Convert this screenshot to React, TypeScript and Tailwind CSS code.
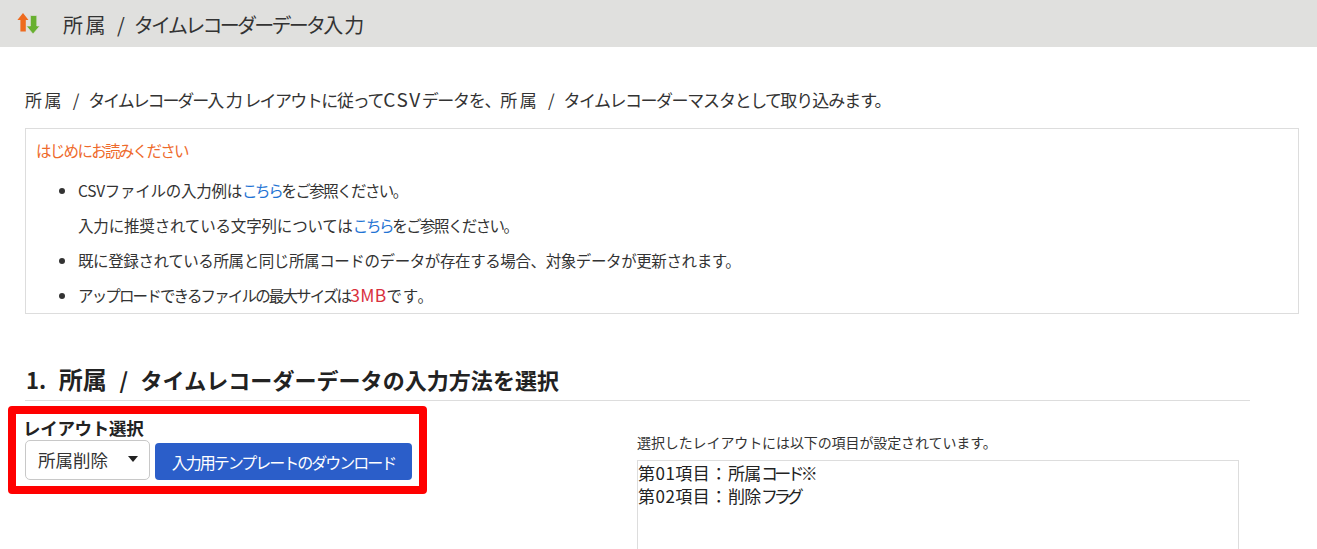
export default function App() {
  return (
    <div className="relative h-[549px] w-[1317px] overflow-hidden bg-white text-[#333333] font-['Noto_Sans_CJK_JP','Liberation_Sans',sans-serif]">
      <header className="flex h-[47px] items-center bg-[#e0e0de] pl-[16px]">
        <svg width="24" height="24" viewBox="0 0 24 24">
          <path d="M7 1 L12.5 8 H9.8 V19.5 H4.4 V8 H1.4 Z" fill="#ee6b1f" />
          <path d="M17 22 L23.8 14 H20.8 V3.5 H14.4 V14 H10.4 Z" fill="#68b030" stroke="#e0e0de" strokeWidth="0.7" />
        </svg>
        <h1 className="ml-[23px] mt-[3px] whitespace-nowrap text-[20px] font-normal leading-none [word-spacing:4.5px] text-[#333333]">
          <span className="tracking-[2.5px]">所属</span> / <span className="tracking-[-2.75px]">タイムレコーダーデータ</span>
          <span className="tracking-[1px]">入力</span>
        </h1>
      </header>

      <div className="pl-[25px] pr-[18px]">
        <p className="mt-[41px] h-[24px] text-[17px] leading-[24px] [word-spacing:5px] whitespace-nowrap">
          <span className="tracking-[2.5px]">所属</span> / <span className="tracking-[-2.1px]">タイムレコーダー</span>
          <span className="tracking-[1.5px]">入力</span>
          <span className="tracking-[-1.6px]">レイアウト</span>
          <span className="tracking-[-1.25px]">に従って</span>
          <span className="text-[19px] leading-none tracking-[1.5px]">CSV</span>
          <span className="tracking-[-1.3px]">データを、</span>
          <span className="tracking-[2.5px]">所属</span> / <span className="tracking-[-1.5px]">タイムレコーダー</span>
          <span className="tracking-[-1.1px]">マスタ</span>
          <span className="tracking-[-1.7px]">として</span>
          <span className="tracking-[-1px]">取り込みます。</span>
        </p>

        <section className="mt-[16px] h-[186px] border border-[#dddddd] pl-[10px] pt-[10px] text-[15.5px]">
          <p className="h-[22px] leading-[22px] tracking-[-1.7px] text-[#ee6a2c]">はじめにお読みください</p>
          <ul className="mt-[12px] list-disc pl-[42px] leading-[35px] whitespace-nowrap marker:text-[#333333]">
            <li>
              <span className="tracking-[-0.27px]">CSVファイルの入力例は</span>
              <span className="tracking-[-2.3px] text-[#1f74d4]">こちら</span>
              <span className="tracking-[-1.6px]">をご参照ください。</span>
              <br />
              <span className="tracking-[-0.17px]">入力に推奨されている文字列については</span>
              <span className="tracking-[-2.3px] text-[#1f74d4]">こちら</span>
              <span className="tracking-[-1.6px]">をご参照ください。</span>
            </li>
            <li className="tracking-[-0.4px]">既に登録されている所属と同じ所属コードのデータが存在する場合、対象データが更新されます。</li>
            <li>
              <span className="tracking-[-1.85px]">アップロードできるファイルの最大サイズは</span>
              <span className="text-[17.5px] leading-none tracking-[0.3px] text-[#d9303e]">3MB</span>
              <span className="tracking-[0.7px]">です。</span>
            </li>
          </ul>
        </section>

        <h2 className="mt-[51px] mr-[49px] h-[36px] border-b border-[#dddddd] pl-[1px] text-[22px] font-bold leading-[28px] tracking-[0.05px] [word-spacing:7.5px] text-[#222222] whitespace-nowrap">
          1. <span className="text-[24px]">所属</span> / タイムレコーダーデータの入力方法を選択
        </h2>

        <div className="flex items-start">
          <div className="w-[612px] pt-[16px]">
            <div className="-ml-[2px] h-[23px] text-[17.5px] font-bold leading-[22px] tracking-[-0.3px] text-[#222222]">レイアウト選択</div>
            <div className="flex items-center gap-[5px]">
              <div className="flex h-[40px] w-[125px] items-center justify-between rounded-[5px] border border-[#c8c8c8] bg-white pl-[12px] pr-[11px] text-[17.5px] text-[#333333]">
                所属削除
                <svg width="10" height="6" viewBox="0 0 10 6" className="mb-[2px]"><path d="M0 0H10L5 6Z" fill="#222222" /></svg>
              </div>
              <button className="mt-[3px] h-[37px] w-[257px] rounded-[4px] bg-[#2b5ec9] text-[16px] tracking-[-2px] text-white">
                入力用テンプレートのダウンロード
              </button>
            </div>
          </div>
          <div className="flex-1 pt-[31px]">
            <p className="h-[28px] text-[14px] leading-[20px] tracking-[-0.1px] text-[#333333] whitespace-nowrap">選択したレイアウトには以下の項目が設定されています。</p>
            <div className="h-[120px] w-[602px] border border-[#dddddd] text-[17px] leading-[23px] text-[#222222]">
              <span className="tracking-[0.5px]">第01項目：</span>
              <span className="tracking-[-0.5px]">所属</span>
              <span className="tracking-[-3.7px]">コード</span>
              <span className="tracking-[-1px]">※</span>
              <br />
              <span className="tracking-[0.5px]">第02項目：</span>
              <span className="tracking-[-0.5px]">削除</span>
              <span className="tracking-[-4px]">フラグ</span>
            </div>
          </div>
        </div>
      </div>

      <div className="pointer-events-none absolute left-[8px] top-[406px] h-[88px] w-[419px] rounded-[4px] border-[8px] border-[#ff0000]" />
    </div>
  );
}
